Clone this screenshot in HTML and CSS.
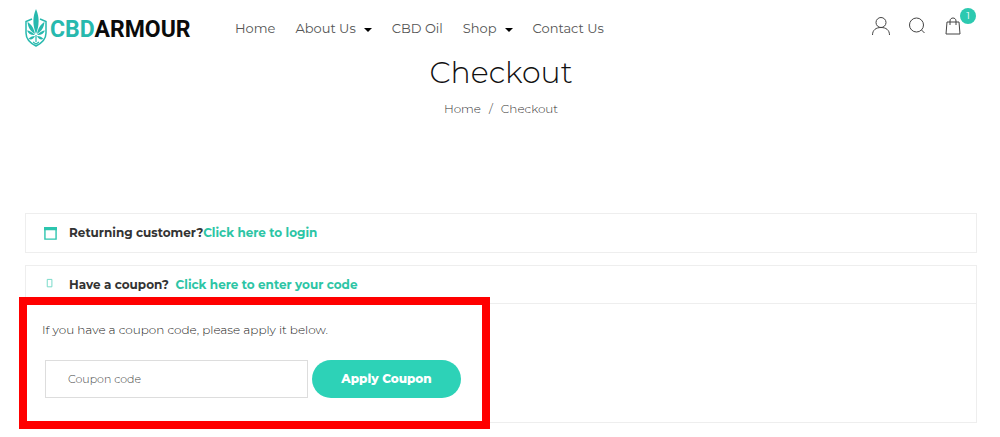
FILE: index.html
```html
<!DOCTYPE html>
<html lang="en">
<head>
<meta charset="utf-8">
<meta name="viewport" content="width=device-width, initial-scale=1">
<title>Checkout - CBD Armour</title>
<link rel="stylesheet" href="styles.css">
</head>
<body>
<header class="header">
  <a class="logo" href="#" aria-label="CBD Armour">
    <svg class="logo-mark" viewBox="0 0 24 38" aria-hidden="true">
      <path d="M8 10 2 12.500V24C2 30 6 34 12 37 18 34 22 30 22 24V12.500L16 10" fill="none" stroke="#27b9ae" stroke-width="1.500"/>
      <path d="M12 0C8.500 8 8.500 16 12 25 15.500 16 15.500 8 12 0Z" fill="#27b9ae"/>
      <path d="M11 25C10 19 7 15 3.500 13 4 18 6 22 11 25ZM13 25C14 19 17 15 20.500 13 20 18 18 22 13 25ZM11 26C8 23 5.500 21.500 3 21.500 4.500 25 7.500 26.500 11 26ZM13 26C16 23 18.500 21.500 21 21.500 19.500 25 16.500 26.500 13 26ZM11 27C8 27 6 28 4.500 30 7.500 31 9.500 30 11 27ZM13 27C16 27 18 28 19.500 30 16.500 31 14.500 30 13 27Z" fill="#27b9ae"/>
      <path d="M12 26V33M9 33 12 35 15 33" fill="none" stroke="#27b9ae" stroke-width="1.200"/>
    </svg>
    <span class="logo-text"><span class="logo-accent">CBD</span>ARMOUR</span>
  </a>
  <nav class="nav" aria-label="Main">
    <a href="#">Home</a>
    <a href="#">About Us<span class="caret"></span></a>
    <a href="#">CBD Oil</a>
    <a href="#">Shop<span class="caret"></span></a>
    <a href="#">Contact Us</a>
  </nav>
  <div class="tools">
    <a class="tool" href="#" aria-label="My account">
      <svg viewBox="0 0 18 18"><circle cx="9" cy="5.500" r="5"/><path d="M.5 18C.5 13 4 10.500 9 10.500S17.500 13 17.500 18"/></svg>
    </a>
    <a class="tool" href="#" aria-label="Search">
      <svg viewBox="0 0 18 18"><circle cx="8.500" cy="8" r="7"/><path d="M13.500 13 16.500 16"/></svg>
    </a>
    <a class="tool" href="#" aria-label="Cart">
      <svg viewBox="0 0 18 18"><path d="M3 5H15L16 17H2ZM6 8V4C6 0 12 0 12 4V8"/></svg>
      <span class="badge">1</span>
    </a>
  </div>
</header>
<main class="page">
  <h1 class="title">Checkout</h1>
  <nav class="crumbs" aria-label="Breadcrumb"><a href="#">Home</a><span class="slash">/</span><span>Checkout</span></nav>
  <section class="notice">
    <svg class="notice-icon" viewBox="0 0 14 14" aria-hidden="true"><path d="M1 1H13V13H1Z" fill="none" stroke="#2cc5ae" stroke-width="1.500"/><path d="M0 0H14V3.500H0Z" fill="#2cc5ae"/></svg>
    <p>Returning customer?<a href="#">Click here to login</a></p>
  </section>
  <section class="notice notice-coupon">
    <svg class="notice-icon" viewBox="0 0 14 14" aria-hidden="true"><path d="M3.500 1.500H8.500V9.500H3.500Z" fill="none" stroke="#6fd8c6"/></svg>
    <p>Have a coupon?&nbsp; <a href="#">Click here to enter your code</a></p>
  </section>
  <form class="coupon">
    <label class="coupon-label" for="coupon">If you have a coupon code, please apply it below.</label>
    <div class="coupon-row">
      <input class="coupon-input" id="coupon" type="text" placeholder="Coupon code">
      <button class="coupon-button" type="button">Apply Coupon</button>
    </div>
    <div class="highlight"></div>
  </form>
</main>
</body>
</html>
```
FILE: styles.css
```css
* {
  box-sizing: border-box;
}

body {
  margin: 0;
  background: #fff;
  color: #555;
  font-family: Montserrat, Inter, "Open Sans", sans-serif;
  font-size: 12px;
  line-height: 16px;
}

a {
  color: inherit;
  text-decoration: none;
}

.header {
  display: flex;
  align-items: center;
  padding: 8px 24px 0;
  height: 48px;
}

.logo {
  display: flex;
  align-items: center;
  gap: 2px;
  width: 168px;
}

.logo-mark {
  width: 24px;
  height: 38px;
}

.logo-text {
  color: #0b0b0b;
  font-family: Roboto, "Liberation Sans", sans-serif;
  font-size: 23px;
  font-weight: 700;
  line-height: 28px;
  padding-top: 4px;
}

.logo-accent {
  color: #27b9ae;
}

.nav {
  display: flex;
  gap: 20px;
  margin-left: 43px;
  font-size: 13px;
  font-weight: 400;
  white-space: nowrap;
}

.caret {
  display: inline-block;
  margin-left: 8px;
  border: 4px solid transparent;
  border-top-color: #000;
  border-bottom: 0;
  vertical-align: middle;
}

.tools {
  display: flex;
  gap: 18px;
  margin-left: auto;
  padding: 2px 14px 0 0;
}

.tool {
  position: relative;
  display: block;
  width: 18px;
  height: 24px;
}

.tool svg {
  display: block;
  width: 18px;
  height: 18px;
  fill: none;
  stroke: #444;
  overflow: visible;
}

.badge {
  position: absolute;
  top: -9px;
  left: 16px;
  width: 16px;
  border-radius: 8px;
  background: #2cc9b0;
  color: #fff;
  font-size: 10px;
  text-align: center;
}

.page {
  padding: 5px 23px 15px 25px;
}

.title {
  margin: 0;
  color: #111;
  font-size: 30px;
  font-weight: 300;
  line-height: 40px;
  text-align: center;
}

.crumbs {
  display: flex;
  justify-content: center;
  gap: 8px;
  margin: 8px 0 96px;
  color: #333;
  font-size: 12px;
  font-weight: 300;
}

.notice {
  display: flex;
  align-items: center;
  gap: 12px;
  height: 40px;
  margin-bottom: 12px;
  padding: 0 18px;
  border: 1px solid #eee;
  color: #333;
  font-size: 12px;
  font-weight: 700;
}

.notice p {
  margin: 0;
}

.notice a {
  color: #2cc5a5;
}

.notice-icon {
  width: 13px;
  height: 13px;
}

.notice-coupon {
  height: 38px;
  margin-bottom: 0;
  border-bottom: 0;
}

.coupon {
  position: relative;
  padding: 18px 18px 24px 16px;
  border: 1px solid #eee;
}

.coupon-label {
  display: block;
  margin-bottom: 22px;
  font-size: 12px;
  font-weight: 300;
  color: #222;
}

.coupon-row {
  display: flex;
  gap: 4px;
  padding-left: 3px;
}

.coupon-input {
  width: 263px;
  height: 38px;
  padding: 0 22px;
  border: 1px solid #ddd;
  background: #fff;
  font: inherit;
  font-size: 11px;
  font-weight: 300;
}

.coupon-input::placeholder {
  color: #444;
  opacity: 1;
}

.coupon-button {
  width: 149px;
  height: 38px;
  border: 0;
  border-radius: 20px;
  background: #2dd2b7;
  color: #fff;
  font: inherit;
  font-weight: 800;
}

.highlight {
  position: absolute;
  top: -7px;
  left: -7px;
  width: 471px;
  bottom: -7px;
  border: 8px solid #f00;
  pointer-events: none;
}
```
